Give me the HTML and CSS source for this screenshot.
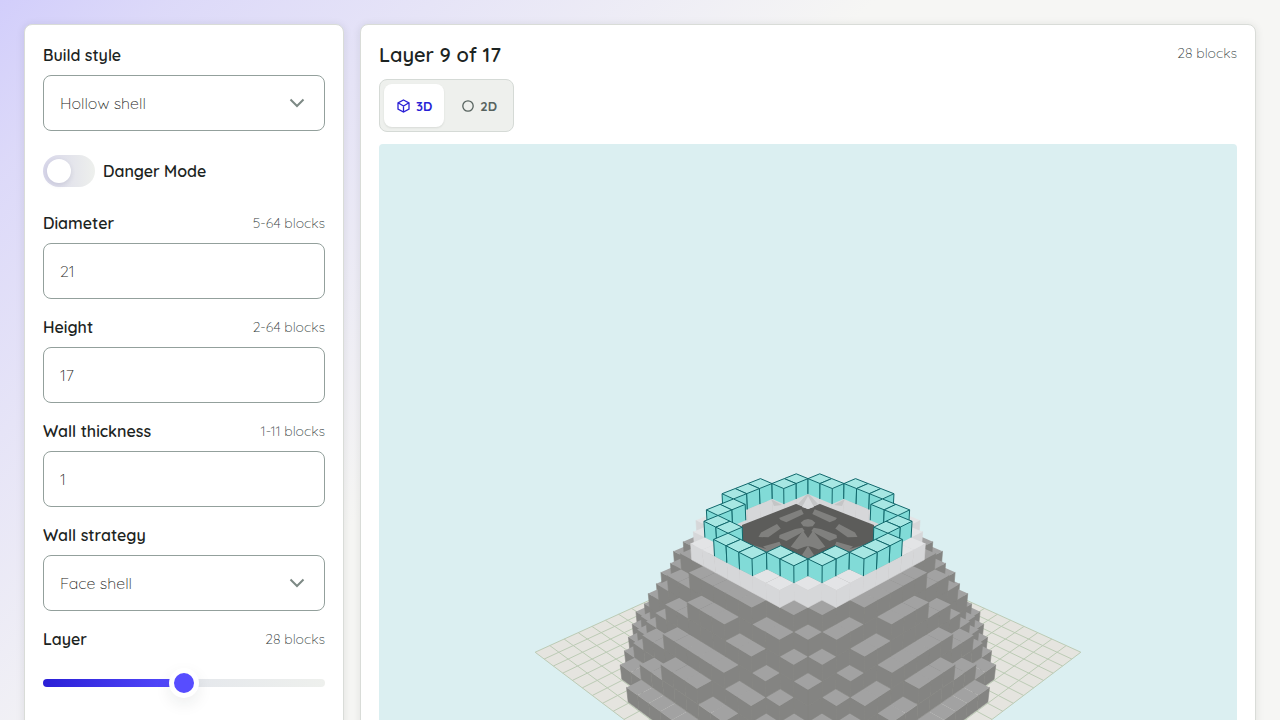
FILE: index.html
```html
<!DOCTYPE html>
<html lang="en">
<head>
<meta charset="utf-8">
<meta name="viewport" content="width=device-width, initial-scale=1">
<title>Block shape builder</title>
<link rel="stylesheet" href="styles.css">
</head>
<body>
<div class="page">
  <form class="panel controls">
    <div class="field">
      <div class="field-head"><label for="style">Build style</label></div>
      <div class="select-wrap">
        <select id="style" class="control"><option>Hollow shell</option><option>Solid</option></select>
        <svg class="chevron" viewBox="0 0 16 10" aria-hidden="true"><path d="M1.500 1.500 8 8l6.500-6.500"/></svg>
      </div>
    </div>
    <div class="switch-row">
      <input id="danger" class="switch" type="checkbox" role="switch">
      <label for="danger">Danger Mode</label>
    </div>
    <div class="field">
      <div class="field-head"><label for="diameter">Diameter</label><span class="hint">5-64 blocks</span></div>
      <input id="diameter" class="control" type="text" inputmode="numeric" value="21">
    </div>
    <div class="field">
      <div class="field-head"><label for="height">Height</label><span class="hint">2-64 blocks</span></div>
      <input id="height" class="control" type="text" inputmode="numeric" value="17">
    </div>
    <div class="field">
      <div class="field-head"><label for="wall">Wall thickness</label><span class="hint">1-11 blocks</span></div>
      <input id="wall" class="control" type="text" inputmode="numeric" value="1">
    </div>
    <div class="field">
      <div class="field-head"><label for="strategy">Wall strategy</label></div>
      <div class="select-wrap">
        <select id="strategy" class="control"><option>Face shell</option><option>Full shell</option></select>
        <svg class="chevron" viewBox="0 0 16 10" aria-hidden="true"><path d="M1.500 1.500 8 8l6.500-6.500"/></svg>
      </div>
    </div>
    <div class="field">
      <div class="field-head"><label for="layer">Layer</label><span class="hint">28 blocks</span></div>
      <input id="layer" class="slider" type="range" min="1" max="17" value="9">
    </div>
  </form>
  <main class="panel viewer">
    <header class="viewer-head"><h1>Layer 9 of 17</h1><span class="count">28 blocks</span></header>
    <div class="tabs">
      <button type="button" class="tab active" aria-pressed="true">
        <svg viewBox="0 0 14 14" aria-hidden="true"><path d="M7.500 1 13 3.800V10.200L7.500 13 2 10.200V3.800ZM2 3.800 7.500 7 13 3.800M7.500 7v6"/></svg>3D</button>
      <button type="button" class="tab" aria-pressed="false">
        <svg viewBox="0 0 14 14" aria-hidden="true"><circle cx="8" cy="7" r="5.200"/></svg>2D</button>
    </div>
    <svg id="scene" class="scene" viewBox="0 0 858 835" role="img" aria-label="3D preview of the cone up to layer 9"></svg>
  </main>
</div>
<script src="scene.js"></script>
</body>
</html>
```
FILE: styles.css
```css
* { box-sizing: border-box; }

body {
  margin: 0;
  min-height: 100vh;
  font: 400 16px/24px Quicksand, Lato, sans-serif;
  color: #1c2422;
  background: #f6f6f4;
}

.page {
  display: grid;
  grid-template-columns: 320px minmax(0, 1fr);
  gap: 16px;
  align-items: start;
  padding: 24px;
  background:
    linear-gradient(135deg, #d2cefb 0, rgba(214, 210, 250, 0.8) 120px, rgba(246, 246, 244, 0) 620px) no-repeat,
    #f6f6f4;
}

.panel {
  background: #fff;
  border: 1px solid #d9dcd8;
  border-radius: 8px;
  padding: 18px;
  box-shadow: 0 1px 8px rgba(28, 36, 34, 0.1);
}

.controls {
  display: flex;
  flex-direction: column;
  gap: 16px;
  min-height: 880px;
}

label { font-weight: 650; }

.field { display: grid; gap: 8px; }

.field-head {
  display: flex;
  justify-content: space-between;
}

.hint {
  font-size: 14px;
  font-weight: 300;
  color: #36413e;
}

.control {
  appearance: none;
  width: 100%;
  height: 56px;
  padding: 0 16px;
  border: 1px solid #93a09c;
  border-radius: 8px;
  background: #fff;
  color: #1c2422;
  font: 350 16px/24px Quicksand, Lato, sans-serif;
}

.select-wrap { display: grid; align-items: center; }
.select-wrap > * { grid-area: 1 / 1; }

.chevron {
  justify-self: end;
  width: 16px;
  height: 10px;
  margin-right: 20px;
  pointer-events: none;
}

.chevron path { fill: none; stroke: #7d8985; stroke-width: 2; }

.switch-row {
  display: flex;
  align-items: center;
  gap: 8px;
  padding: 8px 0;
}

.switch {
  appearance: none;
  width: 52px;
  height: 32px;
  margin: 0;
  padding: 4px;
  border-radius: 16px;
  background: linear-gradient(90deg, #d8d7ea, #eef0ed);
}

.switch::before {
  content: "";
  display: block;
  width: 24px;
  height: 24px;
  border-radius: 50%;
  background: #fff;
  box-shadow: 0 2px 5px rgba(40, 40, 90, 0.12);
}

.slider {
  appearance: none;
  width: 100%;
  height: 8px;
  margin: 20px 0;
  border-radius: 4px;
  background: linear-gradient(90deg, #2a1fd6, #574dff 50%, #e4e7ec 50%, #eef0ed);
}

.slider::-webkit-slider-thumb {
  appearance: none;
  width: 30px;
  height: 30px;
  border: 5px solid #fff;
  border-radius: 50%;
  background: #574dff;
  box-shadow: 0 6px 16px rgba(28, 36, 34, 0.08);
}

.viewer-head {
  display: flex;
  justify-content: space-between;
  align-items: flex-start;
}

h1 {
  margin: 0;
  font-size: 20px;
  font-weight: 650;
  line-height: 24px;
}

.count {
  font-size: 14px;
  font-weight: 350;
  line-height: 20px;
  color: #36413e;
}

.tabs {
  display: inline-flex;
  gap: 4px;
  margin: 12px 0;
  padding: 4px;
  vertical-align: top;
  border: 1px solid #d5dad6;
  border-radius: 8px;
  background: #eef0ed;
}

.tab {
  display: flex;
  align-items: center;
  gap: 6px;
  height: 43px;
  padding: 0 12px;
  border: 0;
  border-radius: 8px;
  background: transparent;
  color: #57635f;
  font: 700 13px/20px Quicksand, Lato, sans-serif;
}

.tab.active {
  background: #fff;
  color: #2a1fd6;
  box-shadow: 0 1px 2px rgba(28, 36, 34, 0.1);
}

.tab svg { width: 14px; height: 14px; }
.tab path, .tab circle { fill: none; stroke: currentColor; stroke-width: 1.3; }

.scene {
  display: block;
  width: 100%;
  border-radius: 4px;
  background: #dbeff1;
}

.floor { fill: #e5e4df; }
.grid { fill: none; stroke: #bccbb5; stroke-width: 1; }
.top { fill: #a2a2a2; }
.side { fill: #848482; stroke: #848482; stroke-width: 0.6; }
.pale-top { fill: #e3e4e6; }
.pale-side { fill: #d6d7d9; stroke: #d6d7d9; stroke-width: 0.6; }
.teal-top { fill: #a7e7e3; stroke: #11686c; stroke-width: 1; stroke-linejoin: round; }
.teal-side { fill: #81dbd7; }
.teal-edge { fill: none; stroke: #11686c; stroke-width: 1; }
.cavity { fill: #5c5c5a; }
.cavity-lit { fill: #80807e; }
.cavity-pale { fill: #d8d9db; }
.cavity-mid { fill: #c4c5c6; }
```
FILE: scene.js
```js
const scene = document.getElementById("scene");
const camera = { focal: 959.14, cx: 429, cy: 417.4, tilt: 0.5066, depth: 57.129, lift: -5.344 };
const DIAMETER = 21;
const HEIGHT = 17;
const LAYER = 8;

function project(x, y, z) {
  const u = (x - z) / Math.SQRT2;
  const v = (x + z) / Math.SQRT2;
  const s = Math.sin(camera.tilt);
  const c = Math.cos(camera.tilt);
  const depth = camera.depth - v * c - y * s;
  const rise = camera.lift - v * s + y * c;
  return [camera.cx + camera.focal * u / depth, camera.cy - camera.focal * rise / depth];
}

function add(tag, attrs) {
  const el = document.createElementNS("http://www.w3.org/2000/svg", tag);
  for (const key in attrs) el.setAttribute(key, attrs[key]);
  scene.appendChild(el);
}

const join = pts => pts.map(p => p[0].toFixed(2) + "," + p[1].toFixed(2)).join(" ");
const polygon = (name, pts) => add("polygon", { class: name, points: join(pts) });
const polyline = (name, pts) => add("polyline", { class: name, points: join(pts) });

function inside(x, y, z) {
  const r = (DIAMETER / 2) * (HEIGHT - 1 - y) / (HEIGHT - 1);
  return y >= 0 && x * x + z * z <= r * r;
}

function filled(x, y, z) {
  if (y < 0 || y > LAYER || !inside(x, y, z)) return false;
  return !(inside(x + 1, y, z) && inside(x - 1, y, z) && inside(x, y, z + 1) &&
    inside(x, y, z - 1) && inside(x, y + 1, z) && inside(x, y - 1, z));
}

function drawFloor() {
  const h = DIAMETER / 2 + 1;
  const g = -0.08;
  polygon("floor", [project(-h, g, -h), project(h, g, -h), project(h, g, h), project(-h, g, h)]);
  for (let n = -h; n <= h; n++) {
    polyline("grid", [project(n, g, -h), project(n, g, h)]);
    polyline("grid", [project(-h, g, n), project(h, g, n)]);
  }
}

function drawLayer(y) {
  const kind = y === LAYER ? "teal-" : y === LAYER - 1 ? "pale-" : "";
  const b = y;
  const t = y + 1;
  for (let x = -10; x <= 10; x++) {
    for (let z = -10; z <= 10; z++) {
      if (!filled(x, y, z)) continue;
      const x0 = x - 0.5, x1 = x + 0.5, z0 = z - 0.5, z1 = z + 0.5;
      if (!filled(x + 1, y, z)) {
        polygon(kind + "side", [project(x1, t, z0), project(x1, t, z1), project(x1, b, z1), project(x1, b, z0)]);
      }
      if (!filled(x, y, z + 1)) {
        polygon(kind + "side", [project(x0, t, z1), project(x1, t, z1), project(x1, b, z1), project(x0, b, z1)]);
      }
      if (!filled(x, y + 1, z)) {
        polygon(kind + "top", [project(x0, t, z0), project(x1, t, z0), project(x1, t, z1), project(x0, t, z1)]);
      }
      if (y === LAYER) {
        if (!filled(x, y, z + 1)) polyline("teal-edge", [project(x0, t, z1), project(x0, b, z1)]);
        if (!filled(x, y, z + 1) || !filled(x + 1, y, z)) polyline("teal-edge", [project(x1, t, z1), project(x1, b, z1)]);
        if (!filled(x + 1, y, z)) polyline("teal-edge", [project(x1, t, z0), project(x1, b, z0)]);
      }
    }
  }
}

function drawCavity() {
  const half = [
    ["cavity", [[0, 365], [-12, 360], [-66, 381], [-66, 398], [0, 417]]],
    ["cavity-mid", [[0, 349], [-10, 360], [0, 365]]],
    ["cavity-pale", [[0, 352], [-6, 363], [0, 365]]],
    ["cavity-mid", [[-37, 355], [-34, 362], [-26, 361]]],
    ["cavity-lit", [[-6.7, 365.3], [-4.3, 370], [-21.7, 378.3], [-27.3, 376], [-29, 374]]],
    ["cavity-lit", [[-31, 380], [-47, 388.5], [-49.5, 393], [-39.7, 393.3], [-27.3, 384.5]]],
    ["cavity-lit", [[-5.7, 383.7], [-12.7, 385], [-28.5, 391], [-29, 394], [-21.7, 397], [-3.3, 387]]],
    ["cavity-lit", [[0, 375], [-4, 376], [-7.3, 378.7], [-4.7, 382.3], [0, 382.7]]],
    ["cavity-lit", [[-5, 386.7], [0, 394], [0, 402], [-4, 403], [-10.7, 405.5], [-17.3, 402.7]]],
    ["cavity-lit", [[0, 401.7], [-6, 411], [0, 415]]],
    ["cavity-lit", [[-45, 402.5], [-28.5, 397.7], [-27, 401], [-38, 408]]]
  ];
  for (const [name, pts] of half) {
    polygon(name, pts.map(([x, y]) => [camera.cx + x, y]));
    polygon(name, pts.map(([x, y]) => [camera.cx - x, y]));
  }
}

drawFloor();
for (let y = 0; y < LAYER; y++) drawLayer(y);
drawCavity();
drawLayer(LAYER);
```
